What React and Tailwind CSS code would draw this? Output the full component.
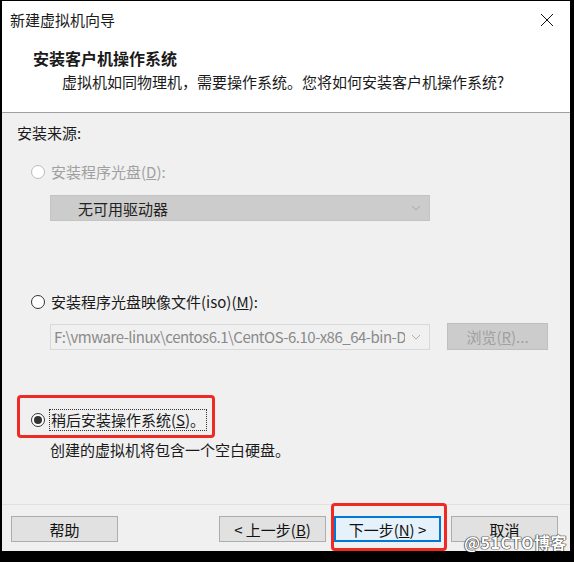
function Radio({ checked = false, disabled = false }) {
  return (
    <span
      className={`flex h-[14px] w-[14px] shrink-0 items-center justify-center rounded-full border bg-white ${
        disabled ? 'border-[#bcbcbc]' : 'border-[#333333]'
      }`}
    >
      {checked && <span className="h-[8px] w-[8px] rounded-full bg-[#333333]" />}
    </span>
  );
}

function Chevron({ color = '#a0a0a0' }) {
  return (
    <svg className="h-[8px] w-[10px] shrink-0" viewBox="0 0 10 8" fill="none" stroke={color} strokeWidth="1">
      <path d="M1 2l4 4 4-4" />
    </svg>
  );
}

function Button({ children, focused = false }) {
  return (
    <div
      className={`flex h-[26px] w-[107px] items-center justify-center bg-[#e1e1e1] text-[15px] leading-none text-[#111] ${
        focused ? 'border-2 border-[#0078d7] bg-[#e5f1fb]' : 'border border-[#adadad]'
      }`}
    >
      {children}
    </div>
  );
}

export default function App() {
  return (
    <div className="h-[562px] w-[574px] overflow-hidden bg-black pb-[11px] pl-[2px] pr-[4px] pt-px font-['Noto_Sans_CJK_SC',sans-serif] text-[#1a1a1a]">
      <div className="relative flex h-full flex-col bg-[#f0f0f0]">
        {/* Header */}
        <div className="h-[112px] shrink-0 border-b border-[#a0a0a0] bg-white">
          <div className="flex h-[38px] items-center justify-between pl-[8px] pr-[16px]">
            <span className="text-[15px] leading-[20px]">新建虚拟机向导</span>
            <svg className="h-[14px] w-[14px]" viewBox="0 0 14 14" fill="none" stroke="#111" strokeWidth="1">
              <path d="M1 1l12 12M13 1L1 13" />
            </svg>
          </div>
          <div className="pl-[31px] pt-[9px] text-[16px] font-bold leading-[20px]">安装客户机操作系统</div>
          <div className="pl-[60px] pt-[4px] text-[15px] leading-[20px]">
            虚拟机如同物理机，需要操作系统。您将如何安装客户机操作系统?
          </div>
        </div>

        {/* Content */}
        <div className="h-[391px] shrink-0 pl-[15px] pt-[10px]">
          <div className="text-[15px] leading-[20px]">安装来源:</div>

          <div className="mt-[19px] flex items-center gap-[6px] pl-[14px] text-[15px] leading-[20px] text-[#a0a0a0]">
            <Radio disabled />
            <span>
              安装程序光盘(<span className="underline">D</span>):
            </span>
          </div>
          <div className="ml-[33px] mt-[13px] flex h-[26px] w-[380px] items-center justify-between border border-[#c4c4c4] bg-[#cccccc] pl-[27px] pr-[8px] text-[15px] leading-none text-[#222]">
            <span>无可用驱动器</span>
            <Chevron color="#a8a8a8" />
          </div>

          <div className="mt-[71px] flex items-center gap-[6px] pl-[14px] text-[15px] leading-[20px]">
            <Radio />
            <span>
              安装程序光盘映像文件(iso)(<span className="underline">M</span>):
            </span>
          </div>
          <div className="ml-[33px] mt-[11px] flex items-center gap-[17px]">
            <div className="flex h-[26px] w-[380px] items-center justify-between gap-[6px] border border-[#d9d9d9] bg-[#f0f0f0] pl-[3px] pr-[8px] text-[15px] leading-[20px] text-[#8a8a8a]">
              <span className="overflow-hidden whitespace-nowrap tracking-[-0.5px]">
                F:\vmware-linux\centos6.1\CentOS-6.10-x86_64-bin-D
              </span>
              <Chevron color="#b0b0b0" />
            </div>
            <div className="flex h-[27px] w-[101px] items-center justify-center border border-[#bfbfbf] bg-[#cccccc] text-[15px] leading-none text-[#a0a0a0]">
              浏览(<span className="underline">R</span>)...
            </div>
          </div>

          <div className="mt-[59px] flex items-center gap-[4px] pl-[14px] text-[15px] leading-[20px]">
            <Radio checked />
            <span className="border border-dotted border-[#333] px-px">
              稍后安装操作系统(<span className="underline">S</span>)。
            </span>
          </div>
          <div className="ml-[33px] mt-[9px] text-[15px] leading-[20px]">创建的虚拟机将包含一个空白硬盘。</div>
        </div>

        {/* Footer */}
        <div className="flex flex-1 items-start border-t border-[#dfdfdf] pl-[9px] pr-[12px] pt-[11px]">
          <Button>帮助</Button>
          <div className="ml-auto flex items-center">
            <Button>
              &lt; 上一步(<span className="underline">B</span>)
            </Button>
            <div className="ml-[8px]">
              <Button focused>
                下一步(<span className="underline">N</span>) &gt;
              </Button>
            </div>
            <div className="ml-[10px]">
              <Button>取消</Button>
            </div>
          </div>
        </div>

        {/* Annotation boxes */}
        <div className="pointer-events-none absolute left-[15px] top-[394px] h-[43px] w-[198px] rounded-[4px] border-[3px] border-[#ee2a24]" />
        <div className="pointer-events-none absolute left-[329px] top-[502px] h-[48px] w-[116px] rounded-[4px] border-[3px] border-[#ee2a24]" />

        {/* Watermark */}
        <div className="pointer-events-none absolute bottom-[0px] right-[3px] text-[16px] font-bold leading-[17px] tracking-[0.5px] text-white [text-shadow:0_0_1px_#333,0_0_1px_#333,0_0_1px_#333,0_0_1px_#333]">
          @51CTO博客
        </div>
      </div>
    </div>
  );
}
